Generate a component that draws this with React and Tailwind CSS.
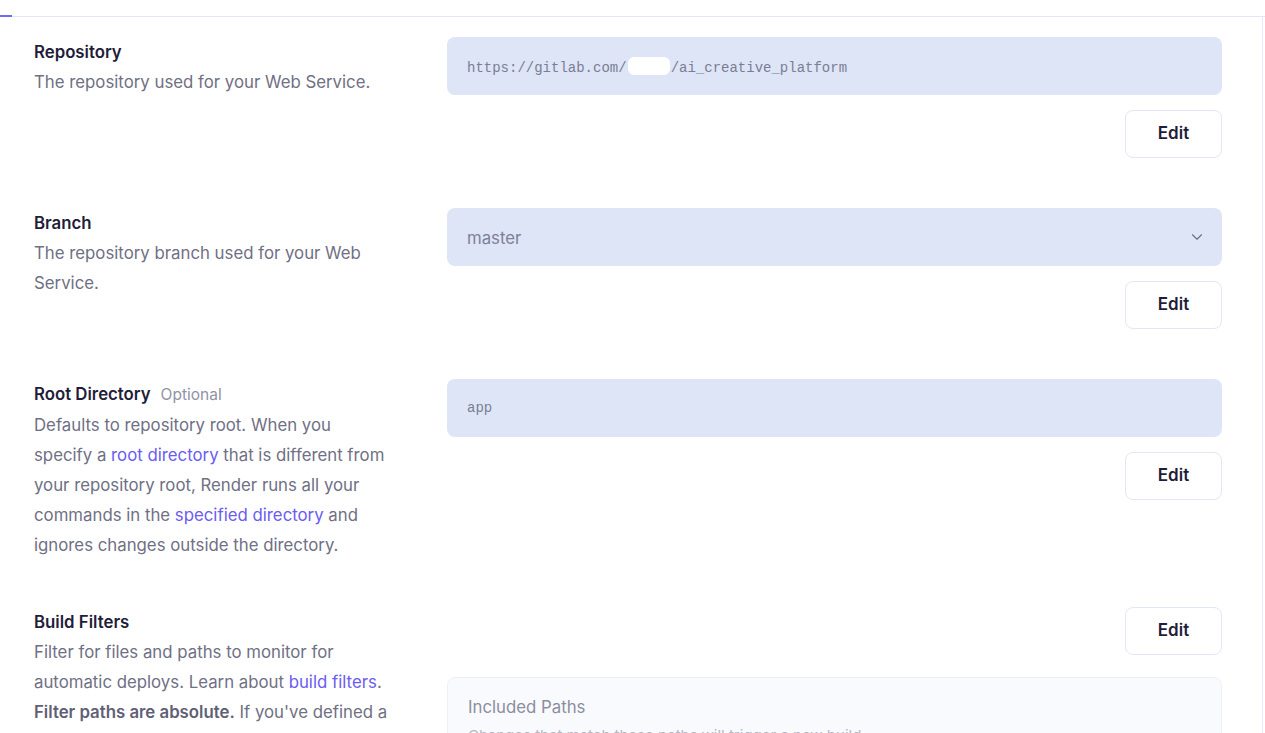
import { ChevronDown } from 'lucide-react'

const FONT = { fontFamily: 'Inter, "Noto Sans", sans-serif' }

function EditButton({ className = '' }) {
  return (
    <button className={`ml-auto flex h-[48px] w-[97px] items-center justify-center rounded-lg border border-[#e2e7f4] bg-white text-[17px] font-semibold text-[#1f1d3a] ${className}`}>
      Edit
    </button>
  )
}

function Link({ children }) {
  return <span className="text-[#6b5cf0]">{children}</span>
}

function Field({ children }) {
  return (
    <div className="flex h-[58px] items-center rounded-lg bg-[#dee5f7] pl-5 pr-4">
      {children}
    </div>
  )
}

function Mono({ children }) {
  return (
    <span className="text-[14px] text-[#7a7e94]" style={{ fontFamily: '"Liberation Mono", "DejaVu Sans Mono", monospace' }}>
      {children}
    </span>
  )
}

function Section({ title, extra, desc, children, className = '' }) {
  return (
    <div className={`grid grid-cols-[413px_775px] ${className}`}>
      <div className="leading-[30px]">
        <div className="text-[16.8px] font-semibold text-[#1f1d3a]">
          {title}
          {extra && <span className="ml-2.5 font-normal text-[15.5px] text-[#9092a6]">{extra}</span>}
        </div>
        <div className="whitespace-nowrap text-[16.8px] text-[#6f7084]">{desc}</div>
      </div>
      <div className="flex flex-col">{children}</div>
    </div>
  )
}

export default function App() {
  return (
    <div className="h-[733px] overflow-hidden bg-white" style={FONT}>
      {/* tab strip line */}
      <div className="relative h-[17px] border-b border-[#e1e5f6]">
        <div className="absolute bottom-[-1px] left-0 h-[2px] w-3 bg-[#6f6cf0]" />
      </div>

      <div className="w-[1263px] border-r border-[#e8ebf6] pl-[34px] pt-[20px] pb-10">
        <Section title="Repository" desc="The repository used for your Web Service.">
          <Field>
            <Mono>
              https://gitlab.com/<span className="mx-[1px] inline-block h-[18px] w-[42px] translate-y-[3px] rounded-md bg-white" />/ai_creative_platform
            </Mono>
          </Field>
          <EditButton className="mt-[15px]" />
        </Section>

        <Section
          className="mt-[50px]"
          title="Branch"
          desc={<>The repository branch used for your Web<br />Service.</>}
        >
          <Field>
            <span className="flex-1 pt-[3px] text-[16.8px] text-[#7e8096]">master</span>
            <ChevronDown size={18} strokeWidth={1.5} className="text-[#6c6f82]" />
          </Field>
          <EditButton className="mt-[15px]" />
        </Section>

        <Section
          className="mt-[50px]"
          title="Root Directory"
          extra="Optional"
          desc={
            <>
              Defaults to repository root. When you<br />
              specify a <Link>root directory</Link> that is different from<br />
              your repository root, Render runs all your<br />
              commands in the <Link>specified directory</Link> and<br />
              ignores changes outside the directory.
            </>
          }
        >
          <Field>
            <Mono>app</Mono>
          </Field>
          <EditButton className="mt-[15px]" />
        </Section>

        <Section
          className="mt-[47px]"
          title="Build Filters"
          desc={
            <>
              Filter for files and paths to monitor for<br />
              automatic deploys. Learn about <Link>build filters</Link>.<br />
              <span className="font-semibold text-[#5f6075]">Filter paths are absolute.</span> If you've defined a
            </>
          }
        >
          <EditButton />
          <div className="mt-[22px] rounded-lg border border-[#eef0f6] bg-[#f9fafd] px-5 pt-[17px] pb-6">
            <div className="text-[16.8px] leading-[24px] text-[#8c8ea0]">Included Paths</div>
            <div className="mt-[6px] text-[15px] text-[#b4b6c4]">Changes that match these paths will trigger a new build.</div>
          </div>
        </Section>
      </div>
    </div>
  )
}
